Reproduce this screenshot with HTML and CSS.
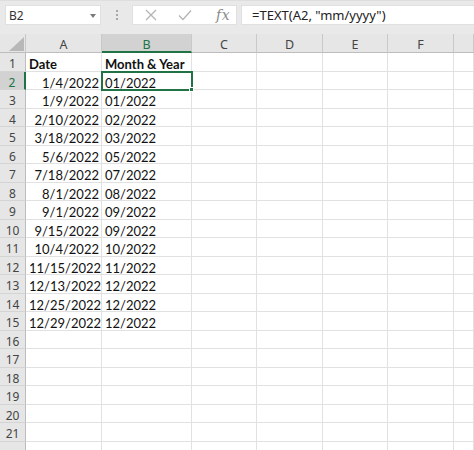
FILE: index.html
```html
<!DOCTYPE html>
<html>
<head>
<meta charset="utf-8">
<link rel="stylesheet" href="styles.css">
</head>
<body>
<div class="toolbar">
  <div class="namebox"><span class="name">B2</span><span class="caret"></span></div>
  <div class="grip"><i></i><i></i><i></i></div>
  <div class="iconbox">
    <svg class="ico" width="12" height="12" viewBox="0 0 12 12"><path d="M1 1 L11 11 M11 1 L1 11" stroke="#b4b4b4" stroke-width="1.3" fill="none"/></svg>
    <svg class="ico" width="14" height="12" viewBox="0 0 14 12"><path d="M1 6.5 L5 10.5 L13 1.5" stroke="#b4b4b4" stroke-width="1.3" fill="none"/></svg>
    <span class="fx">fx</span>
  </div>
  <div class="formula">=TEXT(A2, "mm/yyyy")</div>
</div>
<div class="sheet">
  <div class="corner"><span class="tri"></span></div>
  <div class="ch">A</div><div class="ch sel">B</div><div class="ch">C</div><div class="ch">D</div><div class="ch">E</div><div class="ch">F</div><div class="ch"></div>

  <div class="rh">1</div><div class="c b">Date</div><div class="c b">Month &amp; Year</div><div class="c"></div><div class="c"></div><div class="c"></div><div class="c"></div><div class="c"></div>
  <div class="rh sel">2</div><div class="c r">1/4/2022</div><div class="c active">01/2022</div><div class="c"></div><div class="c"></div><div class="c"></div><div class="c"></div><div class="c"></div>
  <div class="rh">3</div><div class="c r">1/9/2022</div><div class="c">01/2022</div><div class="c"></div><div class="c"></div><div class="c"></div><div class="c"></div><div class="c"></div>
  <div class="rh">4</div><div class="c r">2/10/2022</div><div class="c">02/2022</div><div class="c"></div><div class="c"></div><div class="c"></div><div class="c"></div><div class="c"></div>
  <div class="rh">5</div><div class="c r">3/18/2022</div><div class="c">03/2022</div><div class="c"></div><div class="c"></div><div class="c"></div><div class="c"></div><div class="c"></div>
  <div class="rh">6</div><div class="c r">5/6/2022</div><div class="c">05/2022</div><div class="c"></div><div class="c"></div><div class="c"></div><div class="c"></div><div class="c"></div>
  <div class="rh">7</div><div class="c r">7/18/2022</div><div class="c">07/2022</div><div class="c"></div><div class="c"></div><div class="c"></div><div class="c"></div><div class="c"></div>
  <div class="rh">8</div><div class="c r">8/1/2022</div><div class="c">08/2022</div><div class="c"></div><div class="c"></div><div class="c"></div><div class="c"></div><div class="c"></div>
  <div class="rh">9</div><div class="c r">9/1/2022</div><div class="c">09/2022</div><div class="c"></div><div class="c"></div><div class="c"></div><div class="c"></div><div class="c"></div>
  <div class="rh">10</div><div class="c r">9/15/2022</div><div class="c">09/2022</div><div class="c"></div><div class="c"></div><div class="c"></div><div class="c"></div><div class="c"></div>
  <div class="rh">11</div><div class="c r">10/4/2022</div><div class="c">10/2022</div><div class="c"></div><div class="c"></div><div class="c"></div><div class="c"></div><div class="c"></div>
  <div class="rh">12</div><div class="c r">11/15/2022</div><div class="c">11/2022</div><div class="c"></div><div class="c"></div><div class="c"></div><div class="c"></div><div class="c"></div>
  <div class="rh">13</div><div class="c r">12/13/2022</div><div class="c">12/2022</div><div class="c"></div><div class="c"></div><div class="c"></div><div class="c"></div><div class="c"></div>
  <div class="rh">14</div><div class="c r">12/25/2022</div><div class="c">12/2022</div><div class="c"></div><div class="c"></div><div class="c"></div><div class="c"></div><div class="c"></div>
  <div class="rh">15</div><div class="c r">12/29/2022</div><div class="c">12/2022</div><div class="c"></div><div class="c"></div><div class="c"></div><div class="c"></div><div class="c"></div>
  <div class="rh">16</div><div class="c"></div><div class="c"></div><div class="c"></div><div class="c"></div><div class="c"></div><div class="c"></div><div class="c"></div>
  <div class="rh">17</div><div class="c"></div><div class="c"></div><div class="c"></div><div class="c"></div><div class="c"></div><div class="c"></div><div class="c"></div>
  <div class="rh">18</div><div class="c"></div><div class="c"></div><div class="c"></div><div class="c"></div><div class="c"></div><div class="c"></div><div class="c"></div>
  <div class="rh">19</div><div class="c"></div><div class="c"></div><div class="c"></div><div class="c"></div><div class="c"></div><div class="c"></div><div class="c"></div>
  <div class="rh">20</div><div class="c"></div><div class="c"></div><div class="c"></div><div class="c"></div><div class="c"></div><div class="c"></div><div class="c"></div>
  <div class="rh">21</div><div class="c"></div><div class="c"></div><div class="c"></div><div class="c"></div><div class="c"></div><div class="c"></div><div class="c"></div>
  <div class="rh"></div><div class="c"></div><div class="c"></div><div class="c"></div><div class="c"></div><div class="c"></div><div class="c"></div><div class="c"></div>
</div>
</body>
</html>
```
FILE: styles.css
```css
html, body {
  margin: 0;
  padding: 0;
  background: #ffffff;
  overflow: hidden;
}
body {
  width: 474px;
  height: 450px;
  font-family: "Lato", "Liberation Sans", sans-serif;
}
.toolbar {
  height: 34px;
  box-sizing: border-box;
  background: #e9e9e9;
  border-top: 1px solid #dedede;
  padding-top: 4px;
  display: flex;
  align-items: flex-start;
}
.namebox {
  margin-left: 5px;
  width: 96px;
  height: 20px;
  box-sizing: border-box;
  background: #fff;
  border: 1px solid #e0e0e0;
  display: flex;
  align-items: center;
  justify-content: space-between;
  padding: 1px 4px 0 3px;
}
.name {
  font-family: "Noto Sans", sans-serif;
  font-size: 12px;
  color: #333;
}
.caret {
  width: 0;
  height: 0;
  border-left: 3.5px solid transparent;
  border-right: 3.5px solid transparent;
  border-top: 4px solid #7a7a7a;
}
.grip {
  width: 31px;
  height: 20px;
  display: flex;
  flex-direction: column;
  align-items: center;
  justify-content: center;
  gap: 2px;
}
.grip i {
  display: block;
  width: 2px;
  height: 2px;
  background: #a8a8a8;
}
.iconbox {
  width: 105px;
  height: 20px;
  box-sizing: border-box;
  background: #fff;
  border: 1px solid #e0e0e0;
  display: flex;
  align-items: center;
  padding-left: 12px;
  gap: 21px;
}
.fx {
  font-family: "DejaVu Serif", "Liberation Serif", serif;
  font-style: italic;
  font-size: 14px;
  color: #8a8a8a;
  letter-spacing: 0.5px;
  margin-left: 3px;
}
.formula {
  margin-left: 4px;
  flex: 1;
  height: 20px;
  box-sizing: border-box;
  background: #fff;
  border: 1px solid #e0e0e0;
  border-right: none;
  font-family: "Noto Sans", sans-serif;
  font-size: 13px;
  line-height: 18px;
  color: #222;
  padding-left: 10px;
}
.sheet {
  display: grid;
  grid-template-columns: 26px 76px 90px 65px 66px 65px 66px 20px;
  grid-template-rows: 19px repeat(22, 18.5px);
}
.corner, .ch {
  background: #e6e6e6;
  box-sizing: border-box;
  border-right: 1px solid #c9c9c9;
  border-bottom: 1px solid #bdbdbd;
}
.corner {
  position: relative;
}
.tri {
  position: absolute;
  right: 1px;
  bottom: 1px;
  width: 0;
  height: 0;
  border-left: 15px solid transparent;
  border-bottom: 14px solid #b8b8b8;
}
.ch {
  font-family: "Noto Sans", sans-serif;
  font-size: 12.5px;
  color: #444;
  text-align: center;
  line-height: 18px;
  padding-top: 2px;
}
.ch.sel {
  background: #d2d2d2;
  color: #217346;
  border-bottom: 2px solid #217346;
}
.rh {
  background: #e6e6e6;
  box-sizing: border-box;
  border-right: 1px solid #bdbdbd;
  border-bottom: 1px solid #d4d4d4;
  font-family: "Noto Sans", sans-serif;
  font-size: 12px;
  color: #444;
  text-align: center;
  line-height: 18px;
  padding-top: 2px;
}
.rh.sel {
  background: #d2d2d2;
  color: #217346;
  border-right: 2px solid #217346;
}
.c {
  box-sizing: border-box;
  border-right: 1px solid #e1e1e1;
  border-bottom: 1px solid #e1e1e1;
  font-size: 13px;
  color: #111;
  line-height: 18px;
  padding: 2px 3px 0;
  white-space: nowrap;
  overflow: visible;
}
.c.r {
  text-align: right;
  padding-right: 2px;
}
.c.b {
  font-weight: bold;
}
.c.active {
  position: relative;
  outline: 2px solid #217346;
  outline-offset: -1px;
}
.c.active::after {
  content: "";
  position: absolute;
  right: -3px;
  bottom: -3px;
  width: 5px;
  height: 5px;
  background: #217346;
  border: 1px solid #fff;
  box-sizing: border-box;
}
```
